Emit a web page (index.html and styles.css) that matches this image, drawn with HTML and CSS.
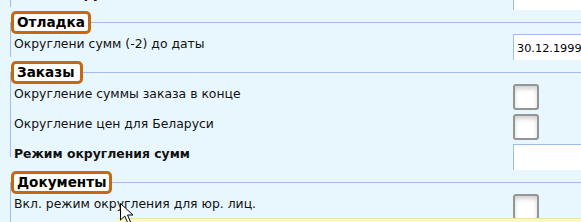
FILE: index.html
```html
<!DOCTYPE html>
<html lang="ru">
<head>
    <meta charset="UTF-8">
    <title>Настройки округления</title>
    <link rel="stylesheet" href="styles.css">
</head>
<body>
    <div class="settings">
        <div class="group group-prev">
            <div class="row row-cut">
                <div class="label bold">Режим округления цен</div>
                <input class="field" type="text">
            </div>
        </div>

        <div class="group group-short">
            <div class="legend">Отладка</div>
            <div class="row">
                <div class="label">Округлени сумм (-2) до даты</div>
                <input class="field" type="text" value="30.12.1999">
            </div>
        </div>

        <div class="group group-long">
            <div class="legend">Заказы</div>
            <div class="row">
                <div class="label">Округление суммы заказа в конце</div>
                <span class="check"></span>
            </div>
            <div class="row">
                <div class="label">Округление цен для Беларуси</div>
                <span class="check"></span>
            </div>
            <div class="row">
                <div class="label bold">Режим округления сумм</div>
                <input class="field" type="text">
            </div>
        </div>

        <div class="group group-last">
            <div class="legend">Документы</div>
            <div class="row">
                <div class="label">Вкл. режим округления для юр. лиц.</div>
                <span class="check"></span>
            </div>
        </div>
    </div>

    <div class="tooltip"></div>
    <svg class="cursor" width="14" height="21" viewBox="0 0 14 21">
        <path d="M0.5 0.5 L0.5 17 L4.7 13 L7.8 20 L10.5 18.8 L7.5 12 L13 12 Z" fill="#fff" stroke="#000" stroke-width="1"/>
    </svg>
</body>
</html>
```

FILE: styles.css
```css
body {
    margin: 0;
    width: 581px;
    height: 222px;
    overflow: hidden;
    position: relative;
    background-color: #e8f6fe;
    font-family: "DejaVu Sans", Verdana, sans-serif;
    font-size: 12.4px;
    color: #111;
}
.group {
    position: relative;
    margin-left: 10px;
    border-top: 1px solid #9fbde9;
    padding-bottom: 8px;
}
.group::before {
    content: "";
    position: absolute;
    left: 0;
    top: 0;
    bottom: 15px;
    border-left: 1px solid #9fbde9;
}
.group-prev {
    border-top: none;
}
.group-long::before {
    bottom: 25px;
}
.group-last::before {
    bottom: 0;
}
.legend {
    display: block;
    width: max-content;
    min-width: 72px;
    box-sizing: border-box;
    height: 23px;
    margin: -12px 0 0 1px;
    padding: 0 3px;
    border: 3px solid #c8670d;
    border-radius: 5px;
    background-color: #fff;
    font-size: 13.6px;
    font-weight: bold;
    line-height: 17px;
    color: #000;
    position: relative;
}
.row {
    display: flex;
    height: 26px;
    margin-bottom: 4px;
}
.row-cut {
    margin-top: -16px;
}
.label {
    flex: none;
    width: 499px;
    padding: 3px 0 0 4px;
    line-height: 14px;
    white-space: nowrap;
}
.bold {
    font-weight: bold;
}
.field {
    flex: none;
    box-sizing: border-box;
    width: 120px;
    height: 26px;
    margin: 0;
    padding: 1px 3px 0;
    border: none;
    border-top: 1px solid #9fbde9;
    border-left: 1px solid #9fbde9;
    background-color: #fff;
    font-family: "DejaVu Sans", Verdana, sans-serif;
    font-size: 11.3px;
    color: #000;
    outline: none;
}
.check {
    flex: none;
    box-sizing: border-box;
    width: 26px;
    height: 26px;
    border: 2px solid #959595;
    border-radius: 3px;
    background-color: #fff;
    box-shadow: inset 0 3px 4px rgba(0, 0, 0, 0.18);
}
.tooltip {
    position: absolute;
    left: 117px;
    top: 218px;
    width: 500px;
    height: 20px;
    background-color: #fbf8c4;
    border-top: 1px solid #ece6a6;
}
.cursor {
    position: absolute;
    left: 120px;
    top: 203px;
}
```
